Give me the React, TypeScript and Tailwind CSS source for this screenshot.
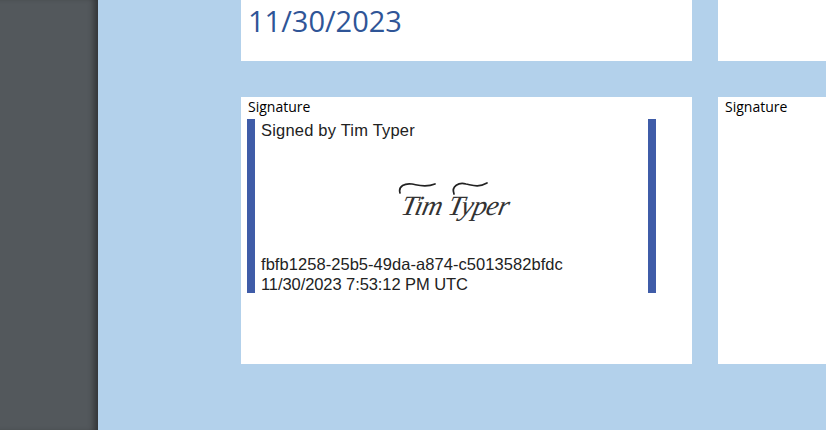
const BLUE_BAR = "border-x-8 border-[#3f5ca8]"

function SignatureMark() {
  return (
    <div className="relative flex h-[50px] items-center justify-center">
      <svg className="absolute left-[137px] top-[9px]" width="115" height="30" viewBox="0 0 115 30" fill="none" stroke="#222" strokeLinecap="round">
        <path d="M2 12C0 5 7 2 14 3C20 4 27 7 37 3" strokeWidth="1.7" />
        <path d="M56 13C53 5 61 1 68 3C74 4 80 7 89 2" strokeWidth="1.7" />
      </svg>
      <span className="ml-[1px] mt-[17px] -skew-x-12 font-['Liberation_Serif',serif] text-[28px] italic leading-none tracking-[-0.6px] text-[#333]">
        Tim Typer
      </span>
    </div>
  )
}

export default function App() {
  return (
    <div className="flex h-screen overflow-hidden bg-[#b3d1eb] font-['Open_Sans',sans-serif]">
      <aside className="h-full w-[98px] shrink-0 bg-[#53585c] shadow-[inset_-7px_0_6px_-3px_rgba(0,0,0,0.4)]" />

      <main className="ml-[143px] flex gap-[26px]">
        <div className="flex w-[451px] shrink-0 flex-col gap-[36px]">
          <div className="h-[61px] bg-white pl-[7px] pt-[2px] text-[29px] leading-[38px] text-[#2f5597]">
            11/30/2023
          </div>

          <div className="h-[267px] bg-white pl-[6px] pt-[0px]">
            <div className="pl-[1px] pb-[2px] text-[14px] leading-[20px] text-black">Signature</div>
            <div className={`flex h-[174px] w-[409px] flex-col justify-between pl-[6px] font-['Liberation_Sans',sans-serif] text-[16.5px] leading-[20px] text-[#222] ${BLUE_BAR}`}>
              <div className="mt-[1px] tracking-[0.2px]">Signed by Tim Typer</div>
              <SignatureMark />
              <div className="mb-[-1px]">
                <div className="tracking-[0.05px]">fbfb1258-25b5-49da-a874-c5013582bfdc</div>
                <div className="tracking-[-0.08px]">11/30/2023 7:53:12 PM UTC</div>
              </div>
            </div>
          </div>
        </div>

        <div className="flex w-[451px] shrink-0 flex-col gap-[36px]">
          <div className="h-[61px] bg-white" />
          <div className="h-[267px] bg-white pl-[7px]">
            <div className="text-[14px] leading-[20px] text-black">Signature</div>
          </div>
        </div>
      </main>
    </div>
  )
}
